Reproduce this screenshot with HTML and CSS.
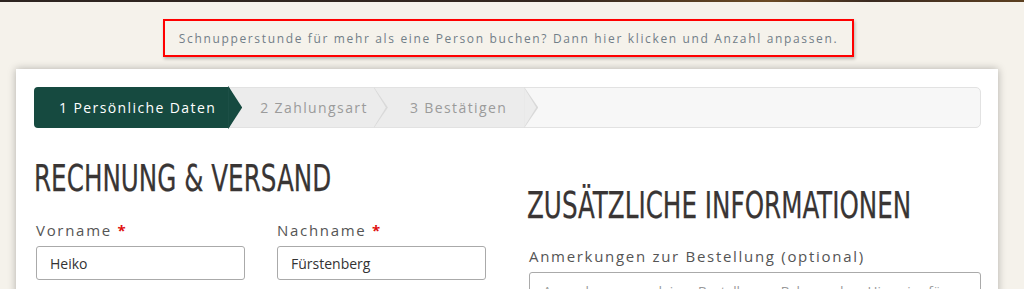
FILE: index.html
```html
<!DOCTYPE html>
<html lang="de">
<head>
  <meta charset="UTF-8" />
  <title>Kasse</title>
  <meta name="viewport" content="width=device-width, initial-scale=1.0" />
  <link rel="stylesheet" href="styles.css">
</head>
<body>
  <div class="top-strip"></div>

  <div class="page">
    <div class="notice">
      Schnupperstunde für mehr als eine Person buchen? Dann hier klicken und Anzahl anpassen.
    </div>

    <div class="card">
      <ol class="steps">
        <li class="step active">1 Persönliche Daten</li>
        <li class="step">2 Zahlungsart</li>
        <li class="step last">3 Bestätigen</li>
      </ol>

      <div class="columns">
        <div class="col">
          <h2>Rechnung &amp; Versand</h2>
          <div class="field-row">
            <div class="field">
              <label for="vorname">Vorname <span class="req">*</span></label>
              <input type="text" id="vorname" value="Heiko" />
            </div>
            <div class="field">
              <label for="nachname">Nachname <span class="req">*</span></label>
              <input type="text" id="nachname" value="Fürstenberg" />
            </div>
          </div>
        </div>

        <div class="col col-extra">
          <h2>Zusätzliche Informationen</h2>
          <div class="field">
            <label for="notes">Anmerkungen zur Bestellung (optional)</label>
            <textarea id="notes" placeholder="Anmerkungen zu deiner Bestellung, z.B. besondere Hinweise für die Lieferung."></textarea>
          </div>
        </div>
      </div>
    </div>
  </div>
</body>
</html>
```

FILE: styles.css
```css
* {
  box-sizing: border-box;
}

body {
  margin: 0;
  background: #f5f2eb;
  color: #444;
  font-family: "Open Sans", "Liberation Sans", sans-serif;
  overflow: hidden;
}

.top-strip {
  height: 2px;
  background: linear-gradient(90deg, #2d2420 0%, #33271f 55%, #6a4a24 75%, #3a2a20 85%, #5c4020 100%);
}

.page {
  width: 982px;
  margin-left: 16px;
}

.notice {
  width: 691px;
  height: 38px;
  margin: 17px 0 0 147px;
  border: 2px solid #ff0000;
  box-shadow: 1px 2px 3px rgba(0,0,0,0.25);
  color: #727e88;
  font-size: 12px;
  letter-spacing: 1.65px;
  display: flex;
  align-items: center;
  justify-content: center;
}

.card {
  margin-top: 12px;
  background: #fff;
  padding: 18px 17px 40px 18px;
  box-shadow: 0 0 8px rgba(0,0,0,0.28);
  height: 260px;
}

.steps {
  list-style: none;
  margin: 0;
  padding: 0;
  display: flex;
  height: 41px;
  background: #f7f7f7;
  border: 1px solid #e2e2e2;
  border-radius: 5px;
}

.step {
  position: relative;
  display: flex;
  align-items: center;
  padding: 0 6px 0 32px;
  background: #ececec;
  color: #9b9b9b;
  font-size: 14px;
  letter-spacing: 1.4px;
}

.step::before,
.step::after {
  content: "";
  position: absolute;
  top: -1px;
  bottom: -1px;
  clip-path: polygon(0 0, 100% 50%, 0 100%);
  z-index: 1;
}

.step::before {
  right: -14px;
  width: 14px;
  background: #d9d9d9;
}

.step::after {
  right: -12px;
  width: 12px;
  background: #ececec;
  top: 0;
  bottom: 0;
}

.step.active {
  padding-left: 25px;
  padding-right: 12px;
  background: #164a40;
  color: #fff;
  border-radius: 4px 0 0 4px;
  margin: -1px 0 -1px -1px;
}

.step.active::before {
  background: #164a40;
}

.step.active::after {
  background: #164a40;
  top: -1px;
  bottom: -1px;
}

.step.last {
  padding-left: 36px;
  padding-right: 17px;
}

.columns {
  display: grid;
  grid-template-columns: 452px 454px;
  column-gap: 41px;
}

h2 {
  margin: 28px 0 0;
  font-family: "Liberation Sans Narrow", "DejaVu Sans Condensed", sans-serif;
  font-weight: normal;
  font-size: 37px;
  line-height: 46px;
  text-transform: uppercase;
  color: #393534;
  -webkit-text-stroke: 0.25px #393534;
  white-space: nowrap;
  transform: scaleX(0.74);
  transform-origin: left center;
}

.col-extra h2 {
  margin-top: 55px;
}

.field-row {
  display: grid;
  grid-template-columns: 209px 209px;
  column-gap: 32px;
  padding-left: 2px;
}

.field {
  margin-top: 18px;
}

.col-extra .field {
  margin-top: 17px;
  padding-left: 2px;
}

label {
  display: block;
  font-size: 15px;
  line-height: 20px;
  letter-spacing: 1.7px;
  color: #555;
  margin-bottom: 6px;
}

.req {
  color: #e01010;
  font-weight: bold;
}

input,
textarea {
  width: 100%;
  border: 1px solid #aaa;
  border-radius: 3px;
  background: #fff;
  font-family: "Open Sans", "Liberation Sans", sans-serif;
  font-size: 14px;
  color: #333;
  outline: none;
}

input {
  height: 34px;
  padding: 0 13px;
}

textarea {
  height: 80px;
  padding: 9px 13px;
  resize: none;
}

textarea::placeholder {
  color: #999;
  font-size: 13.5px;
}
```
